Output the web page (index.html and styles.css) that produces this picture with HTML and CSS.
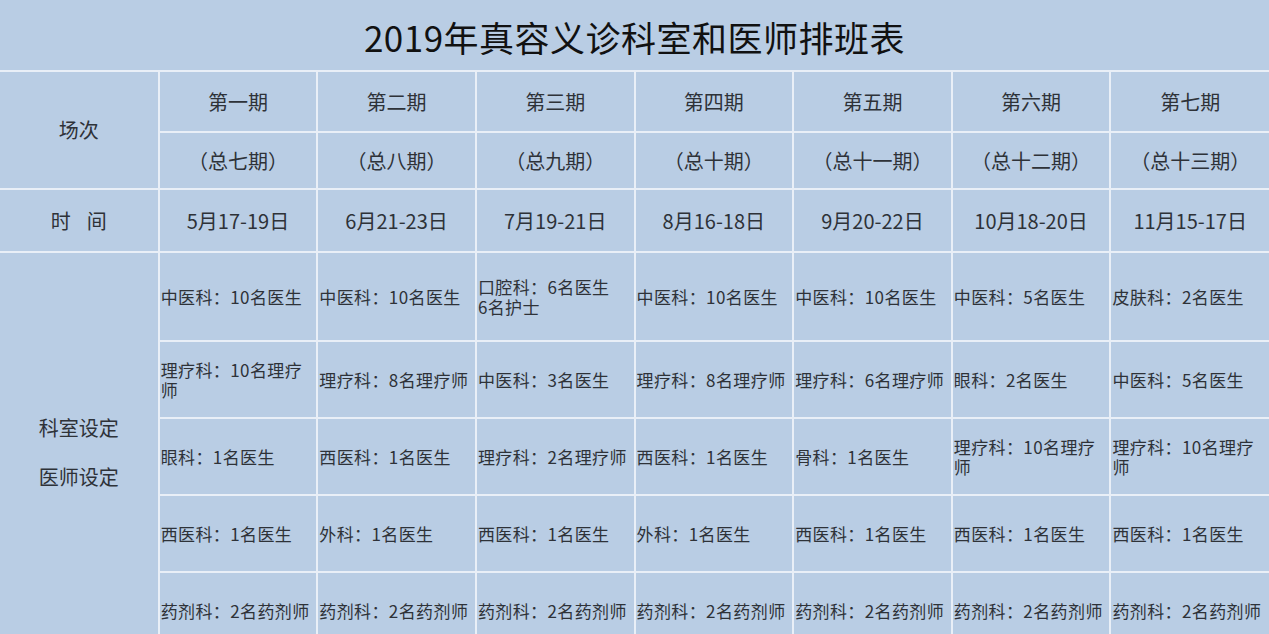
FILE: index.html
```html
<!DOCTYPE html>
<html lang="zh-CN">
<head>
<meta charset="utf-8">
<title>2019年真容义诊科室和医师排班表</title>
<link rel="stylesheet" href="styles.css">
</head>
<body>
<table class="sched">
  <colgroup>
    <col><col><col><col><col><col><col><col>
  </colgroup>
  <tr class="r-title">
    <td colspan="8" class="title">2019年真容义诊科室和医师排班表</td>
  </tr>
  <tr class="r-h1">
    <td rowspan="2" class="head">场次</td>
    <td class="head">第一期</td>
    <td class="head">第二期</td>
    <td class="head">第三期</td>
    <td class="head">第四期</td>
    <td class="head">第五期</td>
    <td class="head">第六期</td>
    <td class="head">第七期</td>
  </tr>
  <tr class="r-h2">
    <td class="head">（总七期）</td>
    <td class="head">（总八期）</td>
    <td class="head">（总九期）</td>
    <td class="head">（总十期）</td>
    <td class="head">（总十一期）</td>
    <td class="head">（总十二期）</td>
    <td class="head">（总十三期）</td>
  </tr>
  <tr class="r-time">
    <td class="head">时<span class="sp"></span>间</td>
    <td class="head">5月17-19日</td>
    <td class="head">6月21-23日</td>
    <td class="head">7月19-21日</td>
    <td class="head">8月16-18日</td>
    <td class="head">9月20-22日</td>
    <td class="head">10月18-20日</td>
    <td class="head">11月15-17日</td>
  </tr>
  <tr class="r-b1">
    <td rowspan="5" class="head side">
      <div class="side-line">科室设定</div>
      <div class="side-line">医师设定</div>
    </td>
    <td class="cell">中医科：10名医生</td>
    <td class="cell">中医科：10名医生</td>
    <td class="cell"><div class="ln">口腔科：6名医生</div><div class="ln">6名护士</div></td>
    <td class="cell">中医科：10名医生</td>
    <td class="cell">中医科：10名医生</td>
    <td class="cell">中医科：5名医生</td>
    <td class="cell">皮肤科：2名医生</td>
  </tr>
  <tr class="r-b">
    <td class="cell">理疗科：10名理疗师</td>
    <td class="cell">理疗科：8名理疗师</td>
    <td class="cell">中医科：3名医生</td>
    <td class="cell">理疗科：8名理疗师</td>
    <td class="cell">理疗科：6名理疗师</td>
    <td class="cell">眼科：2名医生</td>
    <td class="cell">中医科：5名医生</td>
  </tr>
  <tr class="r-b">
    <td class="cell">眼科：1名医生</td>
    <td class="cell">西医科：1名医生</td>
    <td class="cell">理疗科：2名理疗师</td>
    <td class="cell">西医科：1名医生</td>
    <td class="cell">骨科：1名医生</td>
    <td class="cell">理疗科：10名理疗师</td>
    <td class="cell">理疗科：10名理疗师</td>
  </tr>
  <tr class="r-b">
    <td class="cell">西医科：1名医生</td>
    <td class="cell">外科：1名医生</td>
    <td class="cell">西医科：1名医生</td>
    <td class="cell">外科：1名医生</td>
    <td class="cell">西医科：1名医生</td>
    <td class="cell">西医科：1名医生</td>
    <td class="cell">西医科：1名医生</td>
  </tr>
  <tr class="r-b">
    <td class="cell">药剂科：2名药剂师</td>
    <td class="cell">药剂科：2名药剂师</td>
    <td class="cell">药剂科：2名药剂师</td>
    <td class="cell">药剂科：2名药剂师</td>
    <td class="cell">药剂科：2名药剂师</td>
    <td class="cell">药剂科：2名药剂师</td>
    <td class="cell">药剂科：2名药剂师</td>
  </tr>
</table>
</body>
</html>
```
FILE: styles.css
```css
html, body {
  margin: 0;
  padding: 0;
  background: #b9cde4;
}

.sched {
  width: 1269px;
  table-layout: fixed;
  border-collapse: collapse;
  background: #b9cde4;
  font-family: "Noto Sans CJK SC", "Noto Sans", sans-serif;
  color: #2e3238;
}

.sched td {
  border: 2px solid #e9eff7;
  padding: 0;
  vertical-align: middle;
}

.sched tr:first-child td { border-top: none; }
.sched td:first-child { border-left: none; }
.sched tr td:last-child { border-right: none; }
.sched .title { border-left: none; border-right: none; }

.r-title { height: 71px; }
.r-h1 { height: 61px; }
.r-h2 { height: 57px; }
.r-time { height: 63px; }
.r-b1 { height: 89px; }
.r-b { height: 77px; }

.sched .title {
  text-align: center;
  font-size: 35px;
  color: #111;
  letter-spacing: 0.5px;
  padding-top: 2px;
}

.sched .head {
  text-align: center;
  font-size: 20px;
  line-height: 1.2;
}

.sp {
  display: inline-block;
  width: 16px;
}

.sched .side {
  padding-top: 4px;
}

.side-line {
  line-height: 24px;
}
.side-line + .side-line {
  margin-top: 25px;
}

.sched .cell {
  text-align: left;
  font-size: 17px;
  line-height: 20px;
  letter-spacing: 0.4px;
  padding: 0 4px 0 1px;
  word-break: break-all;
}

.ln {
  line-height: 20px;
}
```
